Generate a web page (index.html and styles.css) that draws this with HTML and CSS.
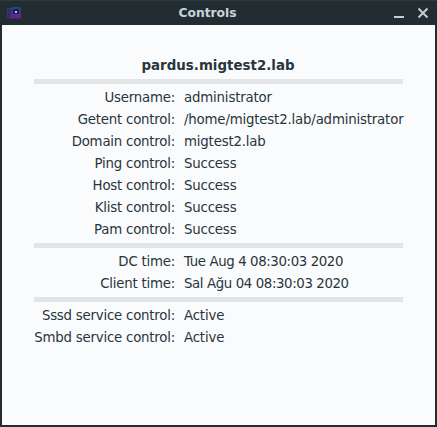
FILE: index.html
```html
<!DOCTYPE html>
<html lang="en">
<head>
<meta charset="utf-8">
<title>Controls</title>
<link rel="stylesheet" href="styles.css">
</head>
<body>
<div class="window">
  <header class="titlebar">
    <svg class="app-icon" width="14" height="12" viewBox="0 0 14 12">
      <defs><linearGradient id="g" x1="0" y1="0" x2="0" y2="1"><stop offset="0" stop-color="#1f4597"/><stop offset="1" stop-color="#6c1f95"/></linearGradient></defs>
      <rect x="0.5" y="1.5" width="5" height="9.500" rx="1" fill="#302b60" stroke="#48307d"/>
      <path d="M2 4h2M2 6h1M2 9h2" stroke="#243d70"/>
      <rect x="4" y="0" width="10" height="11.5" rx="1.5" fill="url(#g)"/>
      <rect x="6" y="2" width="6" height="5" rx="1" fill="#19213b"/>
      <rect x="8" y="4" width="2" height="2" fill="#a9c7d5"/>
    </svg>
    <h1 class="caption">Controls</h1>
    <svg class="buttons" width="35" height="12" viewBox="0 0 35 12">
      <path d="M0 10h10" stroke="#c3cccf" stroke-width="2"/>
      <path d="M24.500 1.500l9 9M33.500 1.500l-9 9" stroke="#c3cccf" stroke-width="2"/>
    </svg>
  </header>
  <main class="content">
    <h2 class="host">pardus.migtest2.lab</h2>
    <div class="separator"></div>
    <dl class="group">
      <dt>Username:</dt><dd>administrator</dd>
      <dt>Getent control:</dt><dd>/home/migtest2.lab/administrator</dd>
      <dt>Domain control:</dt><dd>migtest2.lab</dd>
      <dt>Ping control:</dt><dd>Success</dd>
      <dt>Host control:</dt><dd>Success</dd>
      <dt>Klist control:</dt><dd>Success</dd>
      <dt>Pam control:</dt><dd>Success</dd>
    </dl>
    <div class="separator"></div>
    <dl class="group">
      <dt>DC time:</dt><dd class="time">Tue Aug 4 08:30:03 2020</dd>
      <dt>Client time:</dt><dd class="time">Sal Ağu 04 08:30:03 2020</dd>
    </dl>
    <div class="separator"></div>
    <dl class="group">
      <dt>Sssd service control:</dt><dd>Active</dd>
      <dt>Smbd service control:</dt><dd>Active</dd>
    </dl>
  </main>
</div>
</body>
</html>
```
FILE: styles.css
```css
* { box-sizing: border-box; }
body { margin: 0; background: #222d32; }
.window {
  width: 437px;
  height: 427px;
  padding: 0 2px 2px;
  display: flex;
  flex-direction: column;
  background: #222d32;
  border-top: 1px solid #2d393e;
  font-family: "DejaVu Sans", sans-serif;
  color: #29353b;
}
.titlebar {
  height: 24px;
  padding: 0 6px 0 5px;
  display: grid;
  grid-template-columns: 14px 1fr 35px;
  align-items: center;
}
.caption {
  margin: 0;
  text-align: center;
  font: bold 12.300px/24px "DejaVu Sans", sans-serif;
  color: #c8d4d8;
}
.content {
  flex: 1;
  padding: 29px 32px 0;
  background: #fafbfd;
}
.host {
  margin: 0;
  text-align: center;
  font: bold 13.400px/22px "DejaVu Sans", sans-serif;
  padding-right: 1px;
  height: 22px;
  padding-top: 1px;
}
.separator {
  height: 5px;
  margin: 3px 0 2px;
  background: #e3e4e6;
}
.group {
  margin: 0;
  display: grid;
  grid-template-columns: 141px 1fr;
  grid-auto-rows: 22px;
  column-gap: 9px;
  font-size: 13.333px;
  line-height: 24px;
  letter-spacing: -0.18px;
  white-space: nowrap;
}
dt { display: flex; justify-content: flex-end; letter-spacing: -0.22px; }
dd { margin: 0; }
.time { letter-spacing: -0.39px; }
```
